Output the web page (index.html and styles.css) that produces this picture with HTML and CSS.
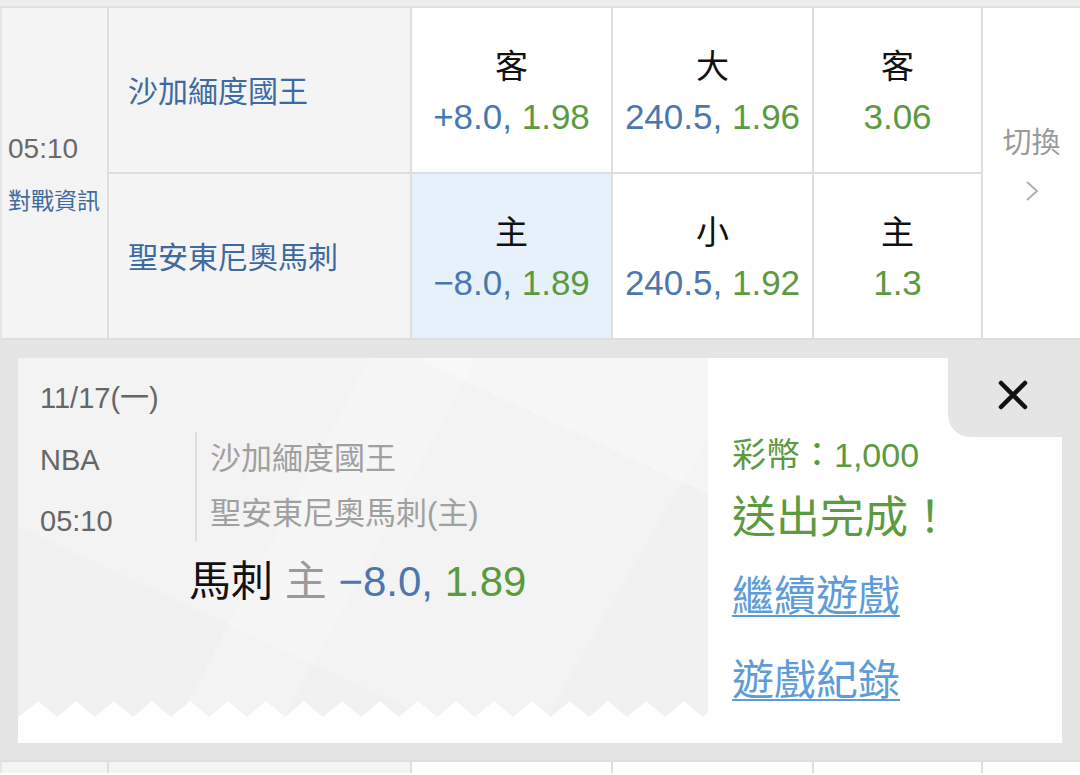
FILE: index.html
```html
<!DOCTYPE html>
<html lang="zh-Hant">
<head>
<meta charset="utf-8">
<title>NBA</title>
<link rel="stylesheet" href="styles.css">
</head>
<body>
<div class="topband"></div>
<div class="match">
  <div class="cell info">
    <div class="time">05:10</div>
    <div class="vs">對戰資訊</div>
  </div>
  <div class="cell switch">
    <div class="switch-text">切換</div>
    <svg class="chev" width="14" height="22" viewBox="0 0 14 22"><polyline points="2,2 12,11 2,20" fill="none" stroke="#b0b0b0" stroke-width="2"/></svg>
  </div>
  <div class="cell team">沙加緬度國王</div>
  <div class="cell odd"><div class="lbl">客</div><div class="val"><span class="b">+8.0,</span> <span class="g">1.98</span></div></div>
  <div class="cell odd"><div class="lbl">大</div><div class="val"><span class="b">240.5,</span> <span class="g">1.96</span></div></div>
  <div class="cell odd"><div class="lbl">客</div><div class="val"><span class="g">3.06</span></div></div>
  <div class="cell team">聖安東尼奧馬刺</div>
  <div class="cell odd sel"><div class="lbl">主</div><div class="val"><span class="b">−8.0,</span> <span class="g">1.89</span></div></div>
  <div class="cell odd"><div class="lbl">小</div><div class="val"><span class="b">240.5,</span> <span class="g">1.92</span></div></div>
  <div class="cell odd"><div class="lbl">主</div><div class="val"><span class="g">1.3</span></div></div>
</div>

<div class="panel">
  <div class="ticket">
    <div class="ticket-left">
      <div class="ticket-body">
        <div class="ticket-content">
          <div class="date">11/17(一)</div>
          <div class="game">
            <div class="game-meta">
              <div class="league">NBA</div>
              <div class="gtime">05:10</div>
            </div>
            <div class="game-teams">
              <div class="gteam">沙加緬度國王</div>
              <div class="gteam gteam2">聖安東尼奧馬刺(主)</div>
            </div>
          </div>
          <div class="bet"><span class="bet-team">馬刺</span> <span class="bet-side">主</span> <span class="b">−8.0,</span> <span class="g">1.89</span></div>
        </div>
        <svg class="zig" width="690" height="16" viewBox="0 0 690 16">
          <defs>
            <pattern id="zz" x="1" y="0" width="38" height="16" patternUnits="userSpaceOnUse">
              <polygon points="0,16 19,0 38,16" fill="#ffffff"/>
            </pattern>
          </defs>
          <rect x="0" y="0" width="690" height="16" fill="url(#zz)"/>
        </svg>
      </div>
    </div>
    <div class="ticket-right">
      <div class="coins">彩幣：1,000</div>
      <div class="done">送出完成！</div>
      <a class="link link1" href="#">繼續遊戲</a>
      <a class="link link2" href="#">遊戲紀錄</a>
    </div>
    <div class="close">
      <svg width="30" height="30" viewBox="0 0 30 30"><path d="M3 3 L27 27 M27 3 L3 27" stroke="#111" stroke-width="4.5" stroke-linecap="round"/></svg>
    </div>
  </div>
</div>

<div class="nextrow">
  <div class="ncell grey"></div>
  <div class="ncell grey"></div>
  <div class="ncell"></div>
  <div class="ncell"></div>
  <div class="ncell"></div>
  <div class="ncell"></div>
</div>
</body>
</html>
```

FILE: styles.css
```css
* { box-sizing: border-box; }
html, body { margin: 0; padding: 0; }
body {
  width: 1080px;
  height: 775px;
  overflow: hidden;
  background: #ffffff;
  font-family: "Liberation Sans", "Noto Sans CJK TC", sans-serif;
}

.topband {
  height: 8px;
  background: #eeeeee;
  border-bottom: 2px solid #e0e0e0;
}

.match {
  display: grid;
  grid-template-columns: 105px 301px 199px 199px 167px 1fr;
  grid-template-rows: 164px 164px;
  gap: 2px;
  background: #dedede;
  border-left: 2px solid #e6e6e6;
  border-bottom: 2px solid #dedede;
}

.cell { background: #ffffff; }

.info {
  grid-column: 1;
  grid-row: 1 / span 2;
  background: #f4f4f4;
  display: flex;
  flex-direction: column;
  justify-content: center;
  padding-left: 6px;
}
.time {
  font-size: 28px;
  line-height: 36px;
  color: #6a6a6a;
}
.vs {
  margin-top: 19px;
  font-size: 23px;
  line-height: 30px;
  color: #3f6c9e;
}

.team {
  background: #f4f4f4;
  display: flex;
  align-items: center;
  padding: 0 0 3px 19px;
  font-size: 30px;
  color: #3d6b9f;
}

.odd {
  display: flex;
  flex-direction: column;
  justify-content: center;
  align-items: center;
  padding-top: 4px;
}
.odd.sel { background: #e7f1fb; }
.lbl {
  font-size: 33px;
  line-height: 50px;
  color: #111111;
}
.val {
  font-size: 35px;
  line-height: 50px;
  white-space: nowrap;
}
.b { color: #4a78ae; }
.g { color: #5b9a3e; }

.switch {
  grid-column: 6;
  grid-row: 1 / span 2;
  display: flex;
  flex-direction: column;
  align-items: center;
  justify-content: center;
  padding-bottom: 22px;
}
.switch-text {
  font-size: 29px;
  line-height: 40px;
  color: #9a9a9a;
}
.chev { margin-top: 17px; display: block; }

.panel {
  background: #e5e5e5;
  padding: 18px 18px 17px 18px;
}
.ticket {
  position: relative;
  height: 385px;
  background: #ffffff;
  display: flex;
}
.ticket-left {
  width: 690px;
  padding-bottom: 26px;
  display: flex;
  flex-direction: column;
}
.ticket-body {
  flex: 1;
  display: flex;
  flex-direction: column;
  background:
    linear-gradient(118deg, transparent 0 40%, rgba(255,255,255,0.22) 40% 52%, transparent 52%),
    linear-gradient(205deg, rgba(255,255,255,0.3) 0 20%, transparent 20%),
    linear-gradient(25deg, rgba(0,0,0,0.012) 0 28%, transparent 28%),
    linear-gradient(300deg, rgba(0,0,0,0.01) 0 18%, transparent 18%),
    #f3f3f3;
}
.ticket-content {
  padding: 20px 0 0 22px;
}
.zig { display: block; margin-top: auto; }

.date {
  font-size: 29px;
  line-height: 40px;
  color: #666666;
}
.game {
  display: flex;
  margin-top: 14px;
}
.game-meta {
  width: 155px;
  font-size: 29px;
  color: #666666;
}
.league { line-height: 56px; }
.gtime { line-height: 56px; margin-top: 5px; }
.game-teams {
  align-self: flex-start;
  border-left: 2px solid #dddddd;
  padding-left: 13px;
  font-size: 31px;
  color: #a0a0a0;
}
.gteam { line-height: 54px; }
.gteam2 { margin-top: 1px; }

.bet {
  margin-top: 7px;
  margin-left: 149px;
  font-size: 42px;
  line-height: 52px;
  white-space: nowrap;
}
.bet-team { color: #111111; }
.bet-side { color: #9a9a9a; }

.ticket-right {
  flex: 1;
  padding: 75px 0 0 24px;
  display: flex;
  flex-direction: column;
  align-items: flex-start;
}
.coins {
  font-size: 34px;
  line-height: 44px;
  color: #5b9a3e;
}
.done {
  margin-top: 12px;
  font-size: 44px;
  line-height: 58px;
  color: #5b9a3e;
}
.link {
  font-size: 42px;
  line-height: 56px;
  color: #5e9cd8;
  text-decoration: underline;
  text-decoration-thickness: 2px;
  text-underline-offset: 4px;
}
.link1 { margin-top: 22px; }
.link2 { margin-top: 28px; }

.close {
  position: absolute;
  top: 0;
  right: 0;
  width: 114px;
  height: 79px;
  background: #e5e5e5;
  border-bottom-left-radius: 22px;
  display: flex;
  align-items: center;
  padding: 0 0 5px 50px;
}
.close svg { display: block; }

.nextrow {
  display: grid;
  grid-template-columns: 105px 301px 199px 199px 167px 1fr;
  gap: 2px;
  height: 13px;
  background: #dedede;
  border-top: 2px solid #e0e0e0;
  border-left: 2px solid #e6e6e6;
}
.ncell { background: #ffffff; }
.ncell.grey { background: #f4f4f4; }
```
